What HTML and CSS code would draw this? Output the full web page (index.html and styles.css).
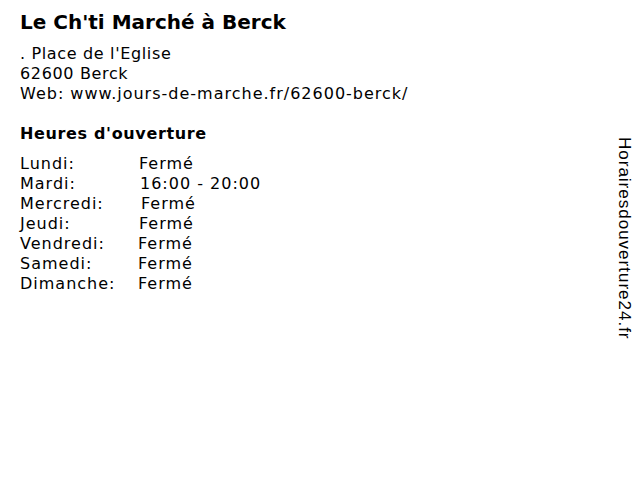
FILE: index.html
```html
<!DOCTYPE html>
<html lang="fr">
<head>
<meta charset="utf-8">
<link rel="stylesheet" href="styles.css">
</head>
<body>
<main class="page">
  <h1 class="title">Le Ch'ti Marché à Berck</h1>
  <div class="address">
    <div>. Place de l'Eglise</div>
    <div>62600 Berck</div>
    <div class="web">Web: www.jours-de-marche.fr/62600-berck/</div>
  </div>
  <h2 class="subtitle">Heures d'ouverture</h2>
  <div class="hours">
    <div class="row"><span class="day">Lundi:</span><span class="time t1">Fermé</span></div>
    <div class="row"><span class="day">Mardi:</span><span class="time t2">16:00 - 20:00</span></div>
    <div class="row"><span class="day">Mercredi:</span><span class="time t3">Fermé</span></div>
    <div class="row"><span class="day">Jeudi:</span><span class="time t1">Fermé</span></div>
    <div class="row"><span class="day">Vendredi:</span><span class="time t0">Fermé</span></div>
    <div class="row"><span class="day">Samedi:</span><span class="time t0">Fermé</span></div>
    <div class="row"><span class="day">Dimanche:</span><span class="time t0">Fermé</span></div>
  </div>
</main>
<div class="brand">Horairesdouverture24.fr</div>
</body>
</html>
```
FILE: styles.css
```css
html, body {
  margin: 0;
  padding: 0;
  background: #fff;
  color: #000;
}
body {
  width: 640px;
  height: 480px;
  position: relative;
  overflow: hidden;
  font-family: "DejaVu Sans", Verdana, sans-serif;
  font-size: 16px;
}
.page {
  padding: 10px 20px 0 20px;
}
.title {
  margin: 0;
  font-size: 20px;
  line-height: 24px;
  font-weight: bold;
}
.address {
  margin-top: 10px;
  line-height: 20px;
  letter-spacing: 0.65px;
}
.web {
  letter-spacing: 1px;
}
.subtitle {
  margin: 20px 0 0 0;
  font-size: 16px;
  line-height: 20px;
  font-weight: bold;
  letter-spacing: 0.65px;
}
.hours {
  margin-top: 10px;
  line-height: 20px;
  letter-spacing: 1px;
}
.row {
  display: flex;
}
.day {
  width: 118px;
}
.t1 { margin-left: 1px; }
.t2 { margin-left: 2px; }
.t3 { margin-left: 3px; }
.brand {
  position: absolute;
  left: 614px;
  top: 137px;
  transform-origin: 0 0;
  transform: translateX(20px) rotate(90deg);
  font-family: "Liberation Sans", Arial, sans-serif;
  font-size: 17px;
  line-height: 20px;
  letter-spacing: 1px;
  white-space: nowrap;
  color: #000;
}
```
